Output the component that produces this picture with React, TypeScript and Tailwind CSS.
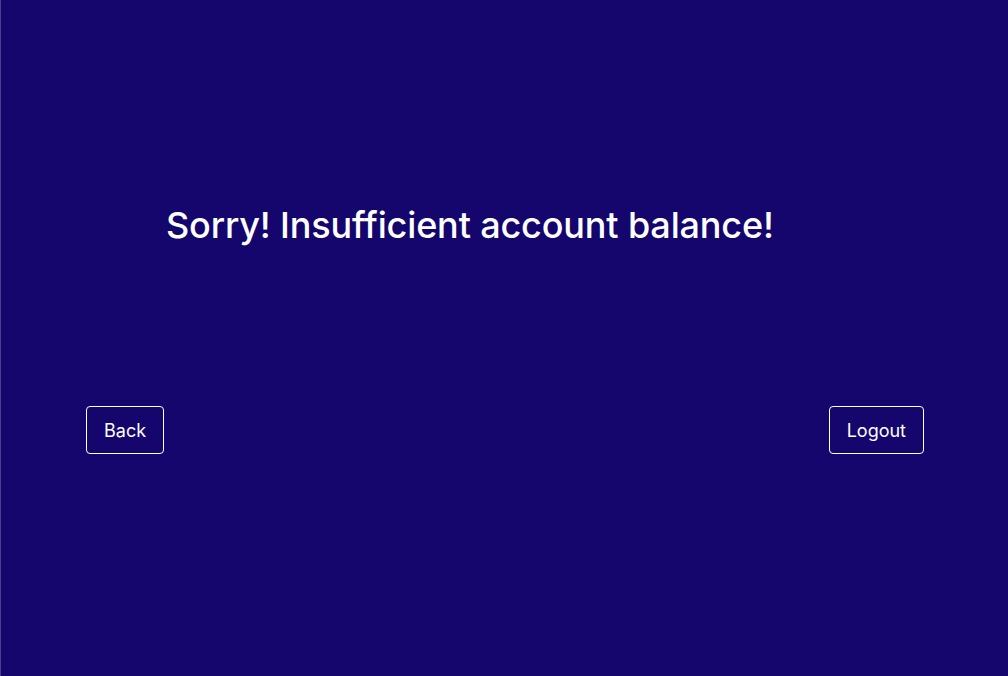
export default function App() {
  return (
    <div
      className="flex h-[676px] w-full flex-col border-l border-[#4a4090] bg-[#14066d] text-white"
      style={{ fontFamily: "Inter, 'Noto Sans', sans-serif" }}
    >
      <div className="pt-[203px] pl-[165px]">
        <h1 className="text-[36px] leading-[44px] font-medium tracking-[-0.15px]">
          Sorry! Insufficient account balance!
        </h1>
      </div>
      <div className="mt-[159px] flex items-center justify-between pl-[85px] pr-[84px]">
        <button className="h-[48px] rounded-[4px] border border-white px-[17px] text-[18px]">
          Back
        </button>
        <button className="h-[48px] rounded-[4px] border border-white px-[17px] text-[18px]">
          Logout
        </button>
      </div>
    </div>
  );
}
